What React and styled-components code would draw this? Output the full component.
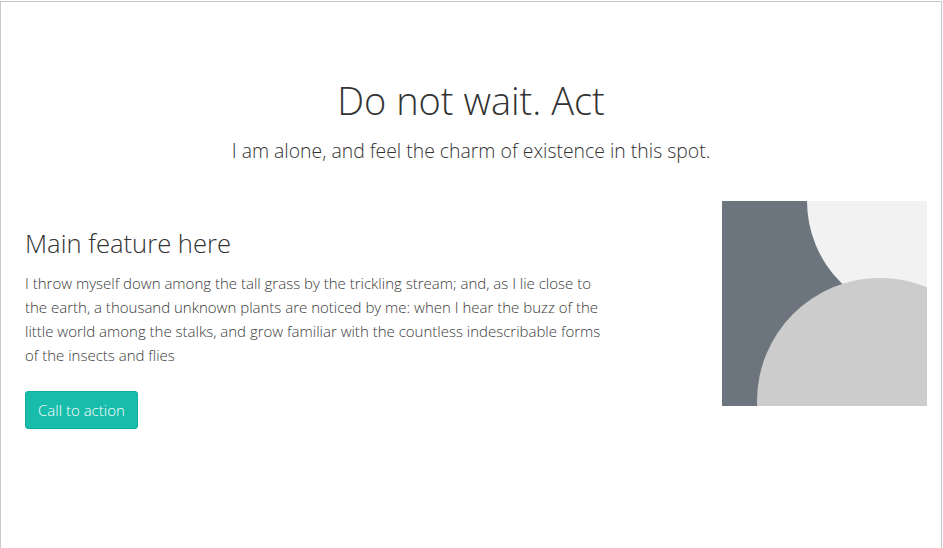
import React from 'react';
import styled, { createGlobalStyle } from 'styled-components';

const GlobalStyle = createGlobalStyle`
  html, body {
    margin: 0;
    padding: 0;
    background: #fff;
  }
  body {
    font-family: "Open Sans", "Liberation Sans", sans-serif;
    font-weight: 300;
    color: #333;
  }
`;

const Frame = styled.div`
  margin-top: 1px;
  width: 942px;
  height: 547px;
  box-sizing: border-box;
  border: 1px solid #c8c8c8;
  border-bottom: none;
  overflow: hidden;
`;

const Hero = styled.header`
  padding-top: 74px;
  text-align: center;
`;

const Title = styled.h1`
  margin: 0;
  font-size: 38px;
  font-weight: 300;
  line-height: 48px;
  color: #333;
`;

const Lead = styled.p`
  margin: 13px 0 0;
  font-size: 19.4px;
  font-weight: 300;
  line-height: 28px;
  color: #333;
`;

const Feature = styled.section`
  display: flex;
  justify-content: space-between;
  align-items: flex-start;
  padding: 36px 14px 0 24px;
`;

const Copy = styled.div`
  width: 576px;
  padding-top: 26px;
`;

const FeatureTitle = styled.h2`
  margin: 0 0 10px;
  font-size: 25.6px;
  font-weight: 300;
  line-height: 34px;
  color: #333;
`;

const Text = styled.p`
  margin: 0 0 24px;
  font-size: 15px;
  line-height: 24px;
  color: #3a3a3a;
`;

const Button = styled.button`
  font-family: inherit;
  font-weight: 300;
  font-size: 15px;
  color: #fff;
  background: #17bcaa;
  border: 1px solid #13ad9d;
  border-radius: 3px;
  padding: 7px 12px;
  line-height: 22px;
  cursor: pointer;
`;

const Picture = styled.svg`
  display: block;
  flex: none;
`;

export default function App() {
  return (
    <>
      <GlobalStyle />
      <Frame>
        <Hero>
          <Title>Do not wait. Act</Title>
          <Lead>I am alone, and feel the charm of existence in this spot.</Lead>
        </Hero>
        <Feature>
          <Copy>
            <FeatureTitle>Main feature here</FeatureTitle>
            <Text>
              I throw myself down among the tall grass by the trickling stream; and, as I lie close to
              the earth, a thousand unknown plants are noticed by me: when I hear the buzz of the
              little world among the stalks, and grow familiar with the countless indescribable forms
              of the insects and flies
            </Text>
            <Button>Call to action</Button>
          </Copy>
          <Picture width="205" height="205" viewBox="0 0 205 205">
            <rect width="205" height="205" fill="#6c757d" />
            <circle cx="200" cy="0" r="115" fill="#f2f2f2" />
            <circle cx="158" cy="200" r="123" fill="#cccccc" />
          </Picture>
        </Feature>
      </Frame>
    </>
  );
}
